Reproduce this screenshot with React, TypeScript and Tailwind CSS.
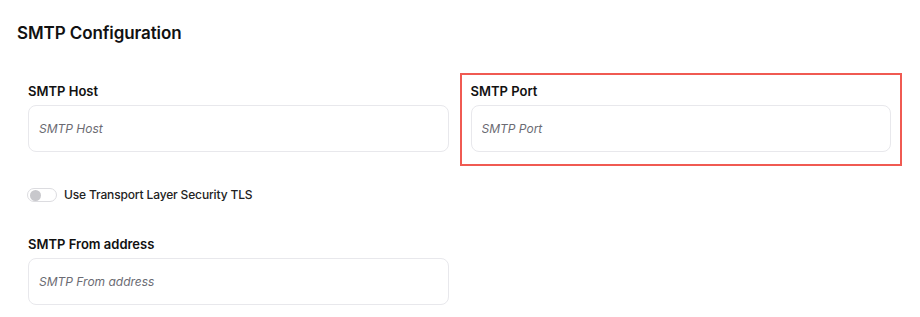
import React from "react";

function Field({ label, placeholder, highlight }: { label: string; placeholder: string; highlight?: boolean }) {
  return (
    <div className={highlight ? "px-[11px] pt-[11px] pb-[14px] outline-2 -outline-offset-2 outline-[#f05a52]" : "px-[11px] pt-[11px] pb-[14px]"}>
      <div className="text-[13px] leading-[18px] font-semibold text-[#111111] -mt-[2px] mb-[5px]">{label}</div>
      <input
        className="w-full h-[47px] rounded-[8px] border border-[#e8e8ec] bg-white px-[10px] text-[12px] italic text-[#333] placeholder:text-[#6b6b73] outline-none"
        placeholder={placeholder}
      />
    </div>
  );
}

export default function App() {
  return (
    <div className="w-[920px] h-[317px] bg-white pl-[17px] pr-[18px] pt-[20px] overflow-hidden" style={{ fontFamily: "Inter, 'Noto Sans', sans-serif" }}>
      <h1 className="text-[17px] leading-[26px] font-semibold text-[#111111] tracking-[-0.1px]">SMTP Configuration</h1>
      <div className="grid grid-cols-2 mt-[27px]">
        <Field label="SMTP Host" placeholder="SMTP Host" />
        <Field label="SMTP Port" placeholder="SMTP Port" highlight />
        <div className="px-[10px] pt-[20px] pb-[22px] flex items-center gap-[7px]">
          <div className="w-[30px] h-[14px] rounded-full border border-[#dcdce0] bg-white flex items-center pl-[2px]">
            <div className="w-[11px] h-[11px] rounded-full bg-[#c8c8cc]" />
          </div>
          <span className="text-[12px] leading-[18px] font-medium text-[#222222] tracking-[-0.15px]">Use Transport Layer Security TLS</span>
        </div>
        <div />
        <Field label="SMTP From address" placeholder="SMTP From address" />
      </div>
    </div>
  );
}
